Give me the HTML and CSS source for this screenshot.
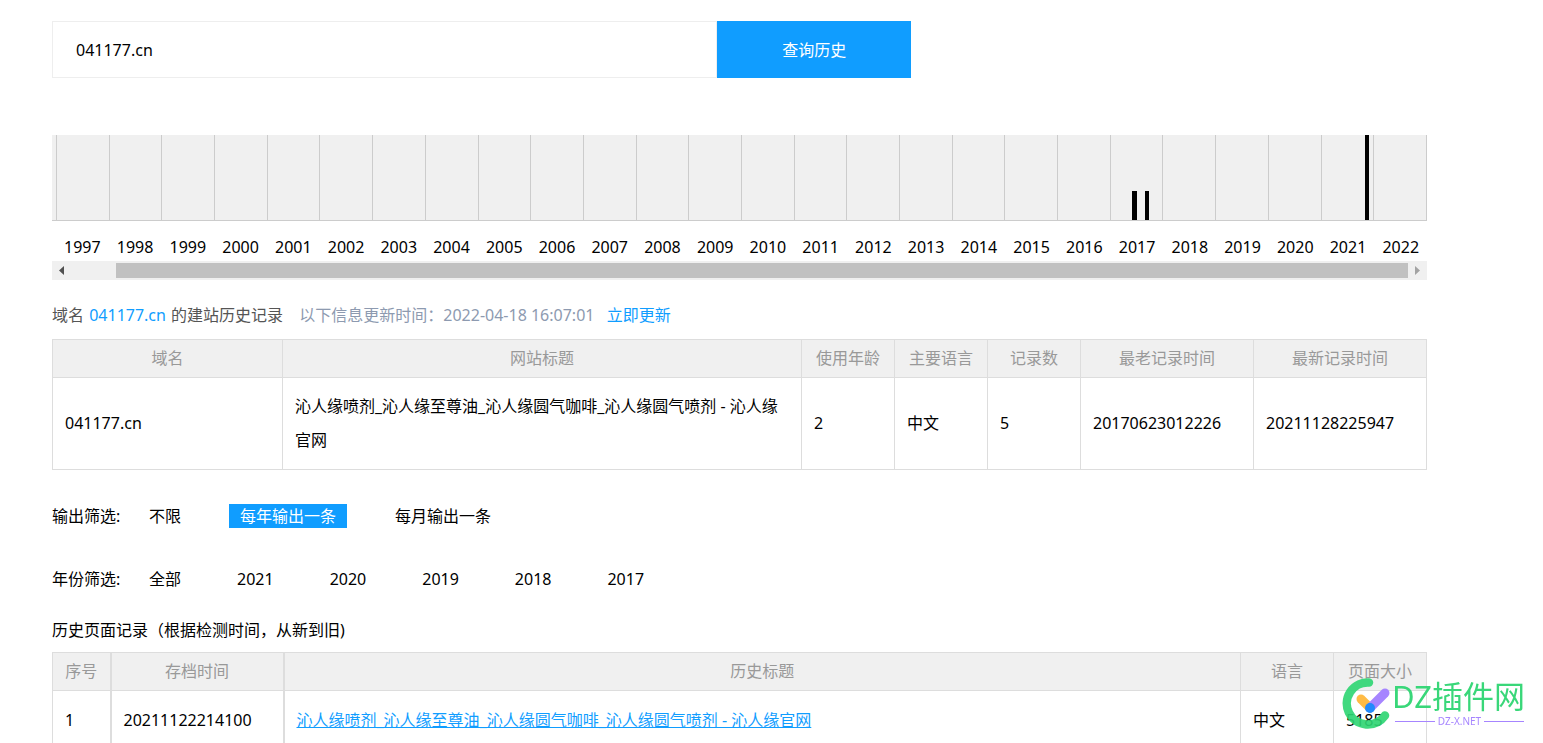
FILE: index.html
```html
<!DOCTYPE html>
<html lang="zh-CN">
<head>
<meta charset="utf-8">
<title>建站历史查询</title>
<link rel="stylesheet" href="styles.css">
</head>
<body>
<main class="page">
  <form class="search">
    <input class="search-input" type="text" value="041177.cn" aria-label="域名">
    <button class="search-button" type="button">查询历史</button>
  </form>

  <section class="timeline">
    <div class="chart">
      <div class="year"></div><div class="year"></div><div class="year"></div><div class="year"></div><div class="year"></div><div class="year"></div><div class="year"></div><div class="year"></div><div class="year"></div><div class="year"></div><div class="year"></div><div class="year"></div><div class="year"></div><div class="year"></div><div class="year"></div><div class="year"></div><div class="year"></div><div class="year"></div><div class="year"></div><div class="year"></div>
      <div class="year"><i class="bar" style="left:42%;width:5px;height:34%"></i><i class="bar" style="left:66%;width:4px;height:34%"></i></div>
      <div class="year"></div><div class="year"></div><div class="year"></div>
      <div class="year"><i class="bar" style="left:84%;width:4px;height:100%"></i></div>
      <div class="year"></div>
    </div>
    <div class="labels">
      <span>1997</span><span>1998</span><span>1999</span><span>2000</span><span>2001</span><span>2002</span><span>2003</span><span>2004</span><span>2005</span><span>2006</span><span>2007</span><span>2008</span><span>2009</span><span>2010</span><span>2011</span><span>2012</span><span>2013</span><span>2014</span><span>2015</span><span>2016</span><span>2017</span><span>2018</span><span>2019</span><span>2020</span><span>2021</span><span>2022</span>
    </div>
    <div class="scroller">
      <svg class="arrow" viewBox="0 0 19 19" aria-hidden="true"><path d="M12 5v9L7 9.500z" fill="#505050"/></svg>
      <div class="track"><div class="thumb"></div></div>
      <svg class="arrow" viewBox="0 0 19 19" aria-hidden="true"><path d="M7 5v9l5-4.500z" fill="#a3a3a3"/></svg>
    </div>
  </section>

  <p class="summary">域名 <span class="blue domain">041177.cn</span> 的建站历史记录 <span class="updated">以下信息更新时间：2022-04-18 16:07:01</span> <a class="blue refresh" href="#">立即更新</a></p>

  <table class="grid overview">
    <colgroup><col class="o-domain"><col><col class="o-small"><col class="o-small"><col class="o-small"><col class="o-time"><col class="o-time"></colgroup>
    <thead><tr><th>域名</th><th>网站标题</th><th>使用年龄</th><th>主要语言</th><th>记录数</th><th>最老记录时间</th><th>最新记录时间</th></tr></thead>
    <tbody><tr><td>041177.cn</td><td>沁人缘喷剂_沁人缘至尊油_沁人缘圆气咖啡_沁人缘圆气喷剂 - 沁人缘官网</td><td>2</td><td>中文</td><td>5</td><td>20170623012226</td><td>20211128225947</td></tr></tbody>
  </table>

  <nav class="filter">
    <span class="filter-name">输出筛选:</span>
    <a href="#">不限</a><a class="active" href="#">每年输出一条</a><a href="#">每月输出一条</a>
  </nav>
  <nav class="filter years">
    <span class="filter-name">年份筛选:</span>
    <a href="#">全部</a><a href="#">2021</a><a href="#">2020</a><a href="#">2019</a><a href="#">2018</a><a href="#">2017</a>
  </nav>

  <h2 class="title">历史页面记录（根据检测时间，从新到旧)</h2>
  <table class="grid records">
    <colgroup><col class="r-index"><col class="r-time"><col><col class="r-small"><col class="r-small"></colgroup>
    <thead><tr><th>序号</th><th>存档时间</th><th>历史标题</th><th>语言</th><th>页面大小</th></tr></thead>
    <tbody><tr><td>1</td><td>20211122214100</td><td><a class="blue underlined" href="#">沁人缘喷剂_沁人缘至尊油_沁人缘圆气咖啡_沁人缘圆气喷剂 - 沁人缘官网</a></td><td>中文</td><td>5185</td></tr></tbody>
  </table>
</main>

<aside class="mark">
  <svg class="mark-logo" viewBox="0 0 50 52" aria-hidden="true">
    <path d="M27 5.500A21 21 0 1 0 43 38.500" fill="none" stroke="#2fd572" stroke-opacity="0.96" stroke-width="8.500" stroke-linecap="round"/>
    <path d="M19 22l9 9" fill="none" stroke="#ffb83b" stroke-width="9" stroke-linecap="round"/>
    <path d="M43 16L28 31" fill="none" stroke="#a27fff" stroke-width="9" stroke-linecap="round"/>
    <circle cx="28" cy="31" r="5" fill="#1684fc"/>
  </svg>
  <div class="mark-text">
    <span class="mark-name">DZ插件网</span>
    <span class="mark-site">DZ-X.NET</span>
  </div>
</aside>
</body>
</html>
```
FILE: styles.css
```css
* { box-sizing: border-box; }
body {
  margin: 0;
  background: #fff;
  color: #000;
  font: 16px/24px "Noto Sans", "Noto Sans CJK SC", sans-serif;
}
a { color: inherit; text-decoration: none; }
.page {
  height: 100vh;
  overflow: hidden;
  padding: 21px 116px 0 52px;
}
.search { display: flex; width: 62.5%; height: 57px; }
.search-input {
  flex: 1;
  min-width: 0;
  padding: 0 23px;
  border: 1px solid #eee;
  background: #fff;
  font: inherit;
  color: inherit;
  outline: 0;
}
.search-button {
  width: 194px;
  border: 0;
  background: #109dff;
  color: #fff;
  font: inherit;
}
.timeline { margin-top: 57px; }
.chart {
  display: flex;
  height: 86px;
  padding-left: 4px;
  border-bottom: 1px solid #ccc;
  border-right: 1px solid #ccc;
  background: #f0f0f0;
}
.year { position: relative; flex: 1; border-left: 1px solid #ccc; }
.bar { position: absolute; bottom: 0; background: #000; }
.labels { display: flex; padding: 14px 0 2px 4px; }
.labels span { flex: 1; text-align: center; }
.scroller { display: flex; height: 19px; background: #f0f0f0; }
.arrow { width: 19px; height: 19px; }
.track { flex: 1; padding: 2px 0; }
.thumb { height: 15px; margin-left: 45px; background: #c1c1c1; }
.summary { margin: 23px 0 12px; color: #555; }
.blue { color: #109dff; }
.domain { margin: 0 1px; }
.updated { margin: 0 8px 0 12px; color: #8d9ab0; }
.grid {
  width: 100%;
  table-layout: fixed;
  border-collapse: collapse;
}
.grid th, .grid td { border: 1px solid #ddd; }
.grid th {
  height: 38px;
  padding: 0 0 1px;
  background: #f0f0f0;
  color: #999;
  font-weight: 400;
}
.grid td { padding: 11px 12px 12px; line-height: 34px; }
.o-domain { width: 230px; }
.o-small { width: 93px; }
.o-time { width: 173px; }
.r-index { width: 58px; }
.r-time { width: 173px; }
.r-small { width: 93px; }
.records th:nth-child(-n+2), .records td:nth-child(-n+2) { border-right-width: 2px; }
.records td { padding-top: 12px; }
.records td:nth-child(-n+3) { padding-left: 12px; }
.underlined { text-decoration: underline; }
.filter { display: flex; margin-top: 34px; }
.filter-name { width: 86px; }
.filter a { padding: 0 11px; margin-right: 37px; }
.filter .active { background: #109dff; color: #fff; }
.years { margin-top: 39px; }
.years a { margin-right: 34px; }
.title { margin: 27px 0 10px; font-size: 16px; font-weight: 400; }
.mark {
  position: fixed;
  right: 18px;
  bottom: 14px;
  display: flex;
  opacity: 0.95;
}
.mark-logo { width: 50px; height: 52px; }
.mark-text { display: flex; flex-direction: column; }
.mark-name { color: #2fd572; font-size: 31px; line-height: 38px; white-space: nowrap; }
.mark-site {
  display: flex;
  align-items: center;
  gap: 3px;
  padding: 0 1px 0 3px;
  color: #a27fff;
  font-size: 10px;
  line-height: 12px;
}
.mark-site::before, .mark-site::after {
  content: "";
  flex: 1;
  height: 1px;
  background: #a27fff;
}
```
